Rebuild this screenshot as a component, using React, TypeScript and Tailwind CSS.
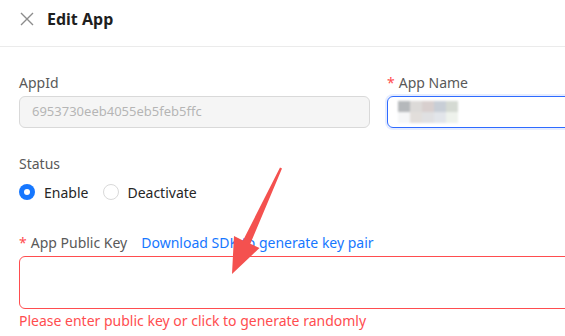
import React from "react";

export default function App() {
  const font = { fontFamily: '"Noto Sans", "Open Sans", Arial, sans-serif' };
  return (
    <div className="relative w-[565px] h-[336px] overflow-hidden bg-white text-[14px]" style={font}>
      <div className="h-[47px] border-b border-[#ebebeb] flex items-center pl-[19px] pb-[8px]">
        <svg width="16" height="16" viewBox="0 0 16 16" className="mr-[12px]">
          <path d="M2 2 L14 14 M14 2 L2 14" stroke="#8c8c8c" strokeWidth="1.4" fill="none" />
        </svg>
        <span className="text-[16px] font-bold text-[#1f1f1f]">Edit App</span>
      </div>
      <div className="pl-[19px] pt-[27px]">
        <div className="flex gap-[17px]">
          <div className="w-[351px] shrink-0">
            <div className="h-[18px] leading-[18px] text-[#595959] mb-[4px]">AppId</div>
            <div className="h-[32px] rounded-[6px] border border-[#d9d9d9] bg-[#f5f5f5] flex items-center px-[12px] text-[13px] text-[#b5b5b5]">
              6953730eeb4055eb5feb5ffc
            </div>
          </div>
          <div className="w-[351px] shrink-0">
            <div className="h-[18px] leading-[18px] text-[#595959] mb-[4px]">
              <span className="text-[#ff4d4f] mr-[4px]">*</span>App Name
            </div>
            <div className="h-[32px] rounded-[6px] border border-[#2f6bff] shadow-[0_0_0_2px_rgba(47,107,255,0.12)] flex items-center px-[10px]">
              <div className="grid grid-cols-5 blur-[1px]">
                <div className="w-[12px] h-[11px] bg-[#b5b8bb]" />
                <div className="w-[12px] h-[11px] bg-[#dcdad8]" />
                <div className="w-[12px] h-[11px] bg-[#d8cfce]" />
                <div className="w-[12px] h-[11px] bg-[#c8ced6]" />
                <div className="w-[12px] h-[11px] bg-[#d5dad3]" />
                <div className="w-[12px] h-[11px] bg-[#f6f7f8]" />
                <div className="w-[12px] h-[11px] bg-[#e2dedb]" />
                <div className="w-[12px] h-[11px] bg-[#e0e0e2]" />
                <div className="w-[12px] h-[11px] bg-[#e2e5ea]" />
                <div className="w-[12px] h-[11px] bg-[#eef2ec]" />
              </div>
            </div>
          </div>
        </div>
        <div className="mt-[27px] h-[18px] leading-[18px] text-[#595959]">Status</div>
        <div className="mt-[8px] flex items-center h-[22px] text-[#262626]">
          <span className="w-[16px] h-[16px] rounded-full bg-[#1677ff] flex items-center justify-center">
            <span className="w-[6px] h-[6px] rounded-full bg-white" />
          </span>
          <span className="ml-[9px]">Enable</span>
          <span className="ml-[15px] w-[16px] h-[16px] rounded-full border border-[#d9d9d9] bg-white" />
          <span className="ml-[8px]">Deactivate</span>
        </div>
        <div className="mt-[31px] h-[18px] leading-[18px] text-[#595959] flex">
          <span className="text-[#ff4d4f] mr-[4px]">*</span>App Public Key
          <span className="ml-[14px] text-[#1677ff]">Download SDK to generate key pair</span>
        </div>
        <div className="mt-[4px] h-[53px] w-[600px] rounded-[6px] border border-[#ff4d4f]" />
        <div className="mt-[3px] h-[18px] leading-[18px] text-[#ff4d4f]">
          Please enter public key or click to generate randomly
        </div>
      </div>
      <svg className="absolute left-0 top-0 pointer-events-none" width="565" height="336" viewBox="0 0 565 336">
        <polygon
          points="232,274 234,236 243,240.5 280,167.6 282,168.4 250.3,243.7 259.5,248"
          fill="#f4514f"
        />
      </svg>
    </div>
  );
}
